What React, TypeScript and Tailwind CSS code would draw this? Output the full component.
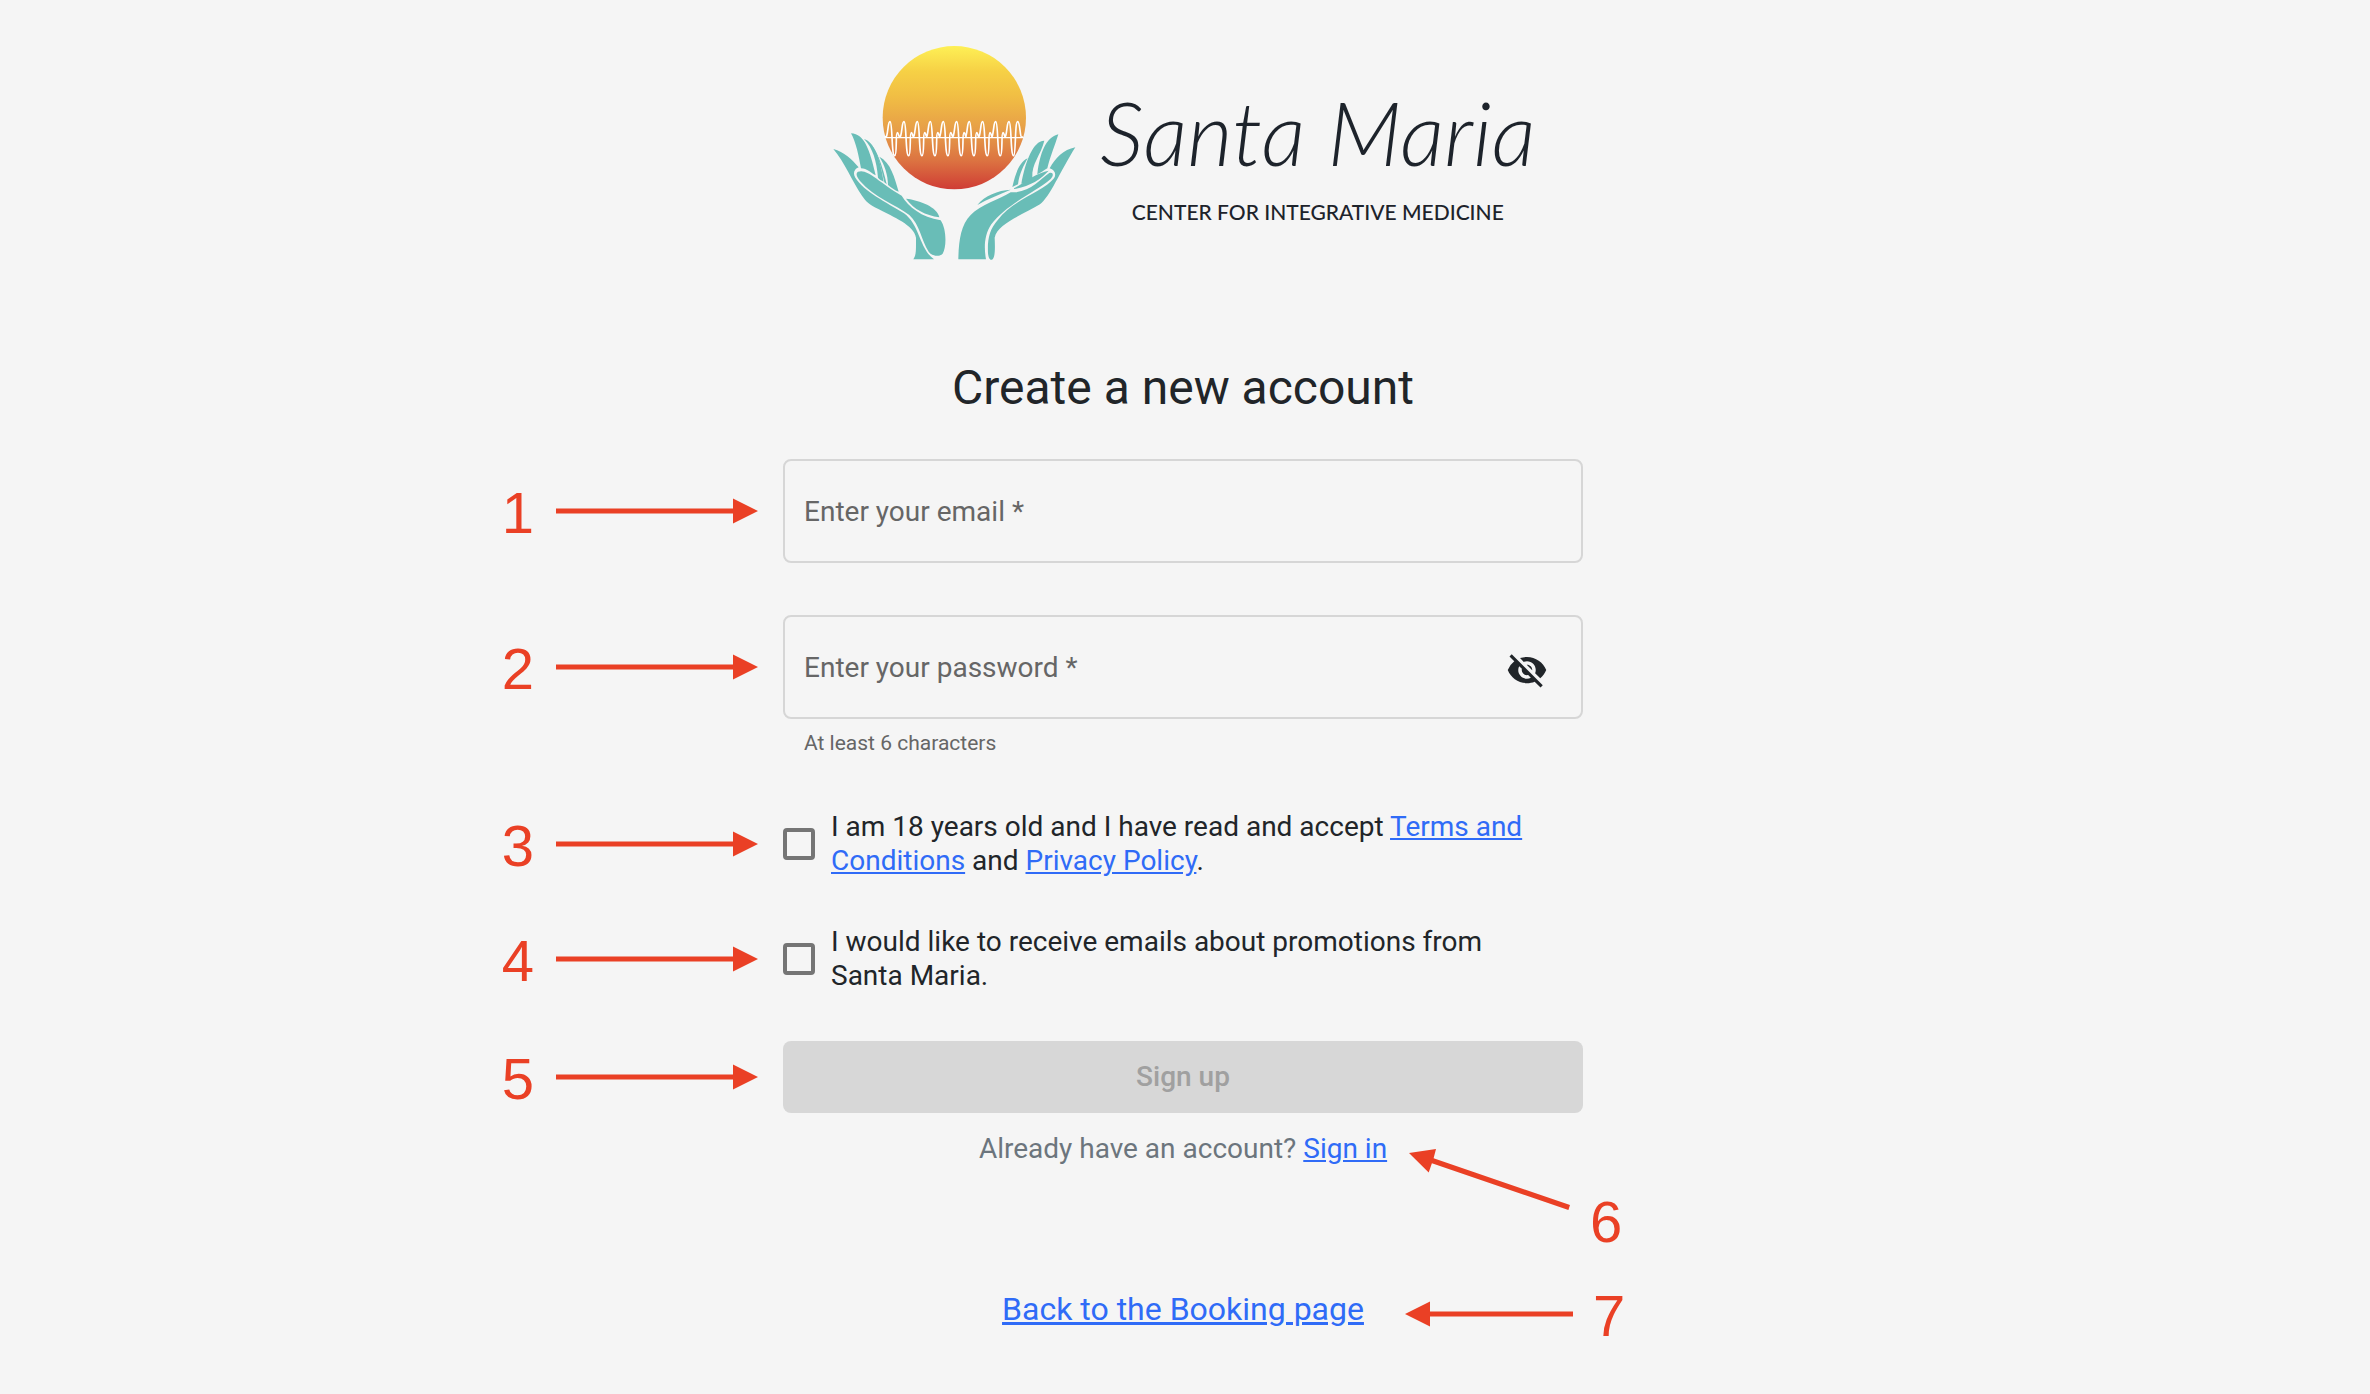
import { useState, type ReactNode } from "react";
import { MdVisibility, MdVisibilityOff } from "react-icons/md";

const WAVE_PEAKS = [210, 252, 292, 331, 370, 410, 448, 488, 527, 567];

const wavePath =
  "M194 322 " +
  WAVE_PEAKS.map(
    (p) =>
      `L${p - 10} 318 C${p - 5} 300 ${p - 6} 275 ${p} 275 C${p + 8} 275 ${p + 4} 377 ${p + 14} 377 ` +
      `C${p + 22} 377 ${p + 16} 308 ${p + 22} 308 C${p + 25} 308 ${p + 26} 318 ${p + 28} 320 `
  )
    .join("")
    .replace(/ C589 377.*$/, " C588 377 584 275 593 275 C600 275 600 318 604 320 L609 322");

function LogoMark() {
  return (
    <svg viewBox="0 0 810 720" className="h-[240px] w-[270px] shrink-0" aria-hidden="true">
      <defs>
        <linearGradient id="sun" x1="0" y1="0" x2="0" y2="1">
          <stop offset="0" stopColor="#fef055" />
          <stop offset="0.18" stopColor="#f6d045" />
          <stop offset="0.35" stopColor="#f1be44" />
          <stop offset="0.6" stopColor="#e69c48" />
          <stop offset="0.8" stopColor="#dc7341" />
          <stop offset="1" stopColor="#cf3c35" />
        </linearGradient>
      </defs>
      <circle cx="403" cy="263" r="215" fill="url(#sun)" />
      <path d={wavePath} fill="none" stroke="#fff" strokeWidth="5" strokeLinejoin="round" />
      <path d="M194 323H611" stroke="#fff" strokeWidth="4" />

      {/* left hand */}
      <g transform="translate(30 285)" fill="#69bdb7">
        <path d="M10 72C42 80 66 104 86 127C72 132 68 146 76 158C102 200 170 232 222 265C270 300 268 372 312 403H250C259 390 258 375 258 338C252 300 190 276 145 252C118 238 108 230 96 212C66 168 44 112 10 72Z" />
        <path d="M63 25C104 26 120 78 137 151C126 146 110 130 93 130C86 92 78 52 63 25Z" />
        <path d="M102 42C134 50 152 108 161 170C154 166 148 163 144 158C140 108 128 68 102 42Z" />
        <path d="M117 50C140 72 158 122 170 178L163 172C152 116 140 78 117 50Z" />
        <path d="M148 95C182 112 194 158 206 200C194 196 184 188 174 180C174 150 164 120 148 95Z" />
        <path d="M84 140C112 130 142 168 215 212C236 246 274 276 332 286C350 312 350 366 338 386C326 398 304 392 296 380C274 346 270 300 238 270C196 238 132 218 90 168C80 156 76 146 84 140Z" />
        <path d="M228 221C270 226 322 246 328 277C286 270 252 254 228 221Z" />
      </g>

      {/* right hand */}
      <g transform="translate(390 285)" fill="#69bdb7">
        <path d="M376 67C340 74 316 100 299 130C314 134 320 148 312 160C280 200 186 226 144 284C118 312 112 344 114 385C116 402 120 405 126 404C134 400 136 380 134 338C142 294 226 266 270 238C300 216 330 140 376 67Z" />
        <path d="M325 28C288 38 270 82 262 148C272 144 282 136 292 130C300 96 316 58 325 28Z" />
        <path d="M283 47C250 46 226 110 214 176C226 174 238 166 247 158C244 116 272 92 283 47Z" />
        <path d="M233 100C206 112 196 150 187 186L204 178C208 146 222 120 233 100Z" />
        <path d="M25 403C26 350 32 300 62 270C92 240 150 222 182 202C240 204 268 164 298 144C310 140 312 152 302 162C260 200 170 236 124 298C102 330 102 370 108 403Z" />
        <path d="M192 190C224 172 262 142 296 137C272 164 238 184 192 192Z" />
        <path d="M82 240C104 212 144 196 182 194C150 208 112 222 82 240Z" />
      </g>
    </svg>
  );
}

function Digit({ children }: { children: ReactNode }) {
  return (
    <span className="pt-1 font-['Liberation_Sans',sans-serif] text-[58px] leading-[56px]">{children}</span>
  );
}

function StepMarker({ n }: { n: number }) {
  return (
    <div className="flex items-center justify-end gap-[22px] pr-[25px] text-[#ea4025]">
      <Digit>{n}</Digit>
      <svg viewBox="0 0 202 26" className="h-[26px] w-[202px]" fill="currentColor" aria-hidden="true">
        <path d="M0 10.5H177V.5L202 13L177 25.5V15.5H0Z" />
      </svg>
    </div>
  );
}

function Row({ n, children }: { n?: number; children: ReactNode }) {
  return (
    <div className="grid grid-cols-[1fr_minmax(0,800px)_1fr] items-center">
      {n ? <StepMarker n={n} /> : <div />}
      {children}
    </div>
  );
}

const fieldClass =
  "peer h-[104px] w-full rounded-lg border-2 border-[#d6d6d6] bg-transparent px-5 text-[28px] text-[#212529] outline-none focus:border-[#2f6bf7]";
const labelClass =
  "pointer-events-none absolute inset-y-0 left-[21px] hidden items-center pt-px text-[28px] text-[#666] peer-placeholder-shown:flex";
const linkClass = "text-[#2f6bf7] underline";

function Consent({ id, children }: { id: string; children: ReactNode }) {
  return (
    <div className="flex items-center gap-4">
      <input
        id={id}
        type="checkbox"
        className="size-8 shrink-0 appearance-none rounded border-4 border-[#757575] checked:border-[#2f6bf7] checked:bg-[#2f6bf7]"
      />
      <label htmlFor={id} className="pr-8 text-[28px] leading-[34px]">
        {children}
      </label>
    </div>
  );
}

export default function App() {
  const [visible, setVisible] = useState(false);

  return (
    <main className="min-h-screen bg-[#f5f5f5] pt-[30px] pr-1 pb-9 font-[Roboto,sans-serif] text-[#212529]">
      <Row>
        <header className="flex items-start gap-[10px] pl-[37px]">
          <LogoMark />
          <div className="flex flex-col items-center gap-6 pt-[58px] font-[Lato,sans-serif] text-[#1d232b]">
            <span className="text-[88px] leading-[88px] font-light whitespace-nowrap italic">Santa Maria</span>
            <span className="text-[21px] leading-6 font-medium whitespace-nowrap">
              CENTER FOR INTEGRATIVE MEDICINE
            </span>
          </div>
        </header>
      </Row>

      <h1 className="mt-[90px] text-center text-[48px] leading-[56px]">Create a new account</h1>

      <form onSubmit={(e) => e.preventDefault()}>
        <div className="mt-[43px]">
          <Row n={1}>
            <div className="relative">
              <input id="email" type="email" required placeholder=" " className={fieldClass} />
              <label htmlFor="email" className={labelClass}>
                Enter your email *
              </label>
            </div>
          </Row>
        </div>

        <div className="mt-[52px]">
          <Row n={2}>
            <div className="relative">
              <input
                id="password"
                type={visible ? "text" : "password"}
                required
                placeholder=" "
                aria-describedby="password-hint"
                className={fieldClass}
              />
              <label htmlFor="password" className={labelClass}>
                Enter your password *
              </label>
              <button
                type="button"
                aria-label="Show password"
                aria-pressed={visible}
                onClick={() => setVisible(!visible)}
                className="absolute inset-y-0 right-[35px] flex items-center pt-1.5"
              >
                {visible ? <MdVisibility className="size-[42px]" /> : <MdVisibilityOff className="size-[42px]" />}
              </button>
            </div>
          </Row>
          <Row>
            <p id="password-hint" className="mt-3 pl-[21px] text-[21px] leading-[25px] text-[#666]">
              At least 6 characters
            </p>
          </Row>
        </div>

        <div className="mt-[54px]">
          <Row n={3}>
            <Consent id="terms">
              I am 18 years old and I have read and accept{" "}
              <a href="#terms" className={linkClass}>
                Terms and Conditions
              </a>{" "}
              and{" "}
              <a href="#privacy" className={linkClass}>
                Privacy Policy
              </a>
              .
            </Consent>
          </Row>
        </div>

        <div className="mt-[47px]">
          <Row n={4}>
            <Consent id="promotions">
              I would like to receive emails about promotions from Santa Maria.
            </Consent>
          </Row>
        </div>

        <div className="mt-12">
          <Row n={5}>
            <button
              type="submit"
              disabled
              className="h-[72px] w-full rounded-lg bg-[#d7d7d7] text-[28px] font-medium text-[#a0a0a0]"
            >
              Sign up
            </button>
          </Row>
        </div>
      </form>

      <div className="mt-[19px]">
        <Row>
          <div className="relative">
            <p className="text-center text-[28px] leading-[34px] text-[#6c757d]">
              Already have an account?{" "}
              <a href="#sign-in" className={linkClass}>
                Sign in
              </a>
            </p>
            <div className="absolute top-4 left-[626px] flex items-start gap-[19px] text-[#ea4025]">
              <svg viewBox="0 0 162 62" className="h-[62px] w-[162px]" fill="currentColor" aria-hidden="true">
                <path d="M0 5L27 1L24.6 10.2L161 57L159.4 62L22.9 15.2L19.7 24.5Z" />
              </svg>
              <div className="mt-[42px] flex">
                <Digit>6</Digit>
              </div>
            </div>
          </div>
        </Row>
      </div>

      <div className="mt-[124px]">
        <Row>
          <div className="relative">
            <p className="text-center text-[32px] leading-[38px]">
              <a href="#booking" className={linkClass}>
                Back to the Booking page
              </a>
            </p>
            <div className="absolute -top-1.5 left-[622px] flex items-center gap-5 text-[#ea4025]">
              <svg viewBox="0 0 168 26" className="h-[26px] w-[168px]" fill="currentColor" aria-hidden="true">
                <path d="M168 10.5H25V.5L0 13L25 25.5V15.5H168Z" />
              </svg>
              <Digit>7</Digit>
            </div>
          </div>
        </Row>
      </div>
    </main>
  );
}
